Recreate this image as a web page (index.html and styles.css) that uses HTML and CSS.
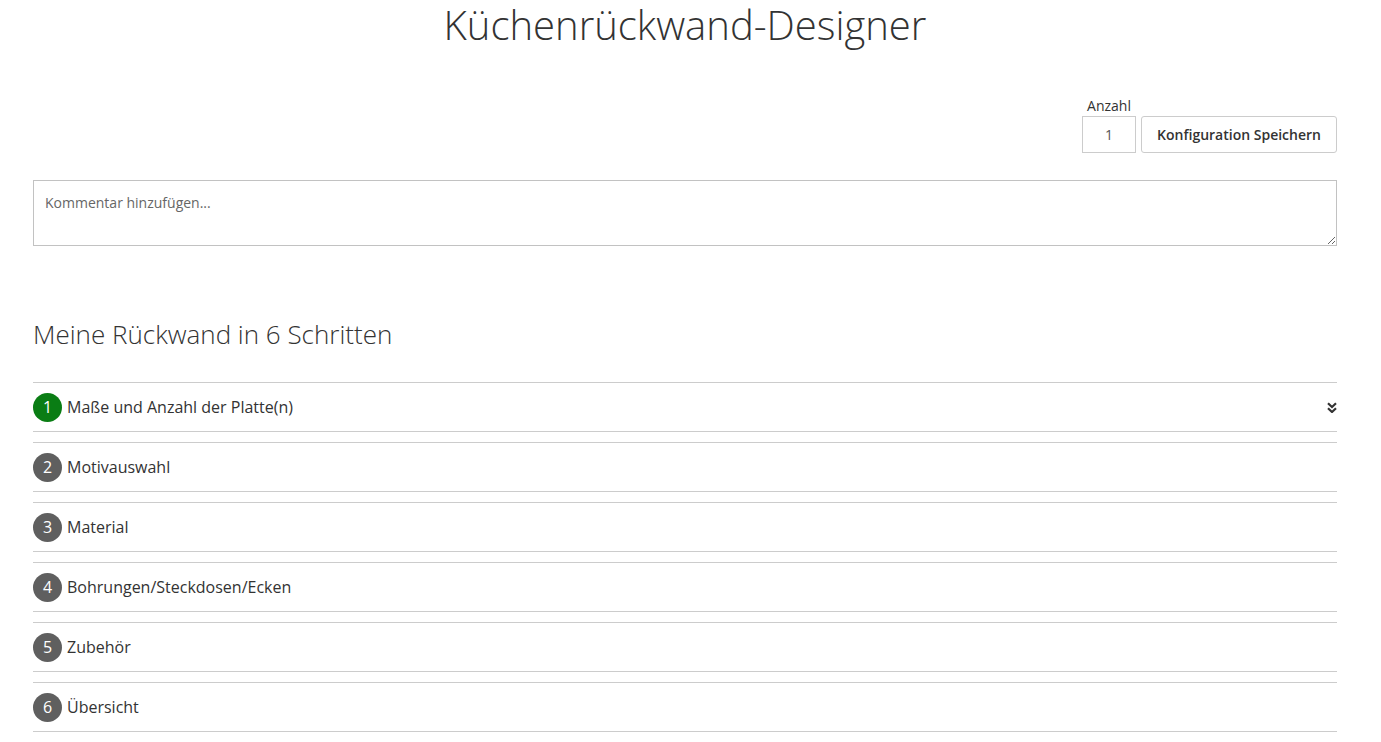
FILE: index.html
```html
<!DOCTYPE html>
<html lang="de">
<head>
<meta charset="utf-8">
<title>Küchenrückwand-Designer</title>
<link rel="stylesheet" href="styles.css">
</head>
<body>
<div class="page">
  <h1 class="title">Küchenrückwand-Designer</h1>
  <div class="toolbar">
    <div class="qty">
      <label class="qty-label" for="qty">Anzahl</label>
      <input class="qty-input" id="qty" type="text" value="1">
    </div>
    <button class="save-btn" type="button">Konfiguration Speichern</button>
  </div>
  <textarea class="comment" placeholder="Kommentar hinzufügen..."></textarea>
  <h2 class="steps-heading">Meine Rückwand in 6 Schritten</h2>
  <div class="steps">
    <div class="step">
      <span class="step-num active">1</span>
      <span class="step-title">Maße und Anzahl der Platte(n)</span>
      <svg class="chev" width="10" height="11" viewBox="0 0 10 11" aria-hidden="true"><path d="M1 1.2 L5 5 L9 1.2 M1 6.2 L5 10 L9 6.2" fill="none" stroke="#333" stroke-width="2.2"/></svg>
    </div>
    <div class="step"><span class="step-num">2</span><span class="step-title">Motivauswahl</span></div>
    <div class="step"><span class="step-num">3</span><span class="step-title">Material</span></div>
    <div class="step"><span class="step-num">4</span><span class="step-title">Bohrungen/Steckdosen/Ecken</span></div>
    <div class="step"><span class="step-num">5</span><span class="step-title">Zubehör</span></div>
    <div class="step"><span class="step-num">6</span><span class="step-title">Übersicht</span></div>
  </div>
</div>
</body>
</html>
```
FILE: styles.css
```css
* { box-sizing: border-box; }
html, body { margin: 0; padding: 0; background: #fff; }
body {
  font-family: "Open Sans", "Liberation Sans", sans-serif;
  color: #333;
  font-size: 14px;
}
.page {
  padding: 3px 44px 0 33px;
}
.title {
  margin: 0;
  font-size: 40px;
  font-weight: 300;
  line-height: 44px;
  text-align: center;
  color: #333;
}
.toolbar {
  margin-top: 49px;
  display: flex;
  justify-content: flex-end;
  align-items: flex-end;
  gap: 5px;
}
.qty {
  display: flex;
  flex-direction: column;
  align-items: center;
}
.qty-label {
  font-size: 14px;
  line-height: 20px;
  margin-bottom: 0;
}
.qty-input {
  width: 54px;
  height: 37px;
  border: 1px solid #ccc;
  border-radius: 0;
  text-align: center;
  font-family: inherit;
  font-size: 14px;
  color: #555;
  padding: 0;
}
.save-btn {
  height: 37px;
  width: 196px;
  border: 1px solid #ccc;
  border-radius: 3px;
  background: #fff;
  font-family: inherit;
  font-weight: 600;
  font-size: 14px;
  color: #333;
  padding: 0;
}
.comment {
  display: block;
  width: 100%;
  height: 66px;
  margin-top: 27px;
  border: 1px solid #c2c2c2;
  padding: 12px 11px;
  font-family: inherit;
  font-size: 14px;
  color: #555;
  resize: vertical;
}
.comment::placeholder { color: #666; }
.steps-heading {
  margin: 70px 0 0;
  font-size: 26px;
  font-weight: 300;
  line-height: 36px;
  color: #333;
}
.steps {
  margin-top: 30px;
  display: flex;
  flex-direction: column;
  gap: 10px;
}
.step {
  display: flex;
  align-items: center;
  height: 50px;
  border-top: 1px solid #ccc;
  border-bottom: 1px solid #ccc;
}
.step-num {
  width: 29px;
  height: 29px;
  border-radius: 50%;
  background: #5f5f5f;
  color: #fff;
  font-size: 16px;
  display: flex;
  align-items: center;
  justify-content: center;
  margin-right: 5px;
  flex: none;
}
.step-num.active { background: #0a7d14; }
.step-title {
  font-size: 16px;
  color: #333;
  flex: 1;
}
.chev { flex: none; }
```
